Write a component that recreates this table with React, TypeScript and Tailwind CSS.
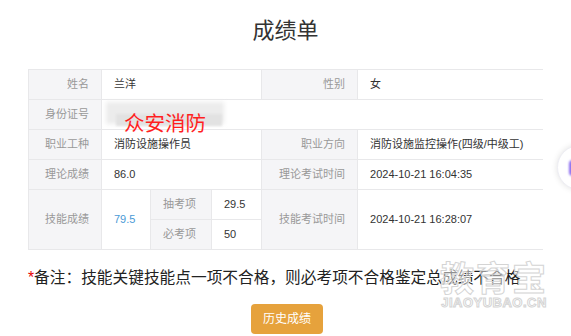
import React from "react";

const label = "bg-[#f5f5f7] text-[#999] text-right pr-3 border border-[#e8e8ea]";
const value = "text-[#333] pl-3 border border-[#e8e8ea]";
const subLabel = "bg-[#f5f5f7] text-[#999] text-left pl-3 border border-[#e8e8ea]";

export default function App() {
  return (
    <div className="relative w-[571px] h-[336px] overflow-hidden bg-white font-['Liberation_Sans','Noto_Sans_CJK_SC',sans-serif]">
      <h1 className="pt-[16px] text-center text-[22px] leading-[30px] text-[#333] font-normal">成绩单</h1>

      <div className="mt-[23px] ml-[28px] w-[514px]">
        <table className="w-full table-fixed border-collapse text-[11px]">
          <colgroup>
            <col className="w-[73px]" />
            <col className="w-[49px]" />
            <col className="w-[61px]" />
            <col className="w-[50px]" />
            <col className="w-[96px]" />
            <col className="w-[185px]" />
          </colgroup>
          <tbody>
            <tr className="h-[30px]">
              <td className={label}>姓名</td>
              <td colSpan={3} className={value}>兰洋</td>
              <td className={label}>性别</td>
              <td className={value + " border-r-0"}>女</td>
            </tr>
            <tr className="h-[30px]">
              <td className={label}>身份证号</td>
              <td colSpan={5} className="border border-r-0 border-[#e8e8ea] p-0">
                <div className="relative h-[29px]">
                  <div className="absolute left-[4px] top-[2px] h-[22px] w-[118px] bg-[#ececec] blur-[2px]" />
                  <div className="absolute left-[14px] top-[14px] h-[12px] w-[106px] bg-[#e2e2e2] blur-[1px]" />
                  <span className="absolute left-[22px] top-[11px] text-[20.5px] leading-[22px] text-[#ff1f1f] font-['Noto_Sans_CJK_SC',sans-serif]">
                    众安消防
                  </span>
                </div>
              </td>
            </tr>
            <tr className="h-[30px]">
              <td className={label}>职业工种</td>
              <td colSpan={3} className={value}>消防设施操作员</td>
              <td className={label}>职业方向</td>
              <td className={value + " border-r-0"}>消防设施监控操作(四级/中级工)</td>
            </tr>
            <tr className="h-[30px]">
              <td className={label}>理论成绩</td>
              <td colSpan={3} className={value}>86.0</td>
              <td className={label}>理论考试时间</td>
              <td className={value + " border-r-0"}>2024-10-21 16:04:35</td>
            </tr>
            <tr className="h-[30px]">
              <td rowSpan={2} className={label}>技能成绩</td>
              <td rowSpan={2} className="pl-3 border border-[#e8e8ea] text-[#4a9ad6]">79.5</td>
              <td className={subLabel}>抽考项</td>
              <td className={value}>29.5</td>
              <td rowSpan={2} className={label}>技能考试时间</td>
              <td rowSpan={2} className={value + " border-r-0"}>2024-10-21 16:28:07</td>
            </tr>
            <tr className="h-[30px]">
              <td className={subLabel}>必考项</td>
              <td className={value}>50</td>
            </tr>
          </tbody>
        </table>
      </div>

      <p className="mt-[18px] ml-[28px] text-[15.7px] leading-[20px] text-[#222] whitespace-nowrap">
        <span className="text-[#e60000]">*</span>备注：技能关键技能点一项不合格，则必考项不合格鉴定总成绩不合格
      </p>

      <div className="mt-[16px] flex justify-center pl-[3px]">
        <button className="h-[30px] w-[72px] rounded-[4px] bg-[#e6a23c] text-[12px] text-white">历史成绩</button>
      </div>

      {/* floating side button, cut off at the edge */}
      <div className="absolute left-[557px] top-[145px] h-[45px] w-[45px] rounded-full bg-white shadow-[0_0_6px_rgba(0,0,0,0.12)] border border-[#eeeef4]">
        <div className="absolute left-[11px] top-[14px] h-[16px] w-[8px] rounded-full bg-[#8b6cf0] blur-[1px]" />
      </div>

      {/* watermark */}
      <div className="pointer-events-none absolute left-[440px] top-[258px] flex flex-col items-center text-white/50 [-webkit-text-stroke:1px_#d4d4d4]">
        <span className="text-[34px] leading-[38px] font-bold tracking-[2px] font-['Noto_Sans_CJK_SC',sans-serif]">教育宝</span>
        <span className="text-[13px] leading-[14px] font-bold tracking-[0.5px]">JIAOYUBAO.CN</span>
      </div>
    </div>
  );
}
